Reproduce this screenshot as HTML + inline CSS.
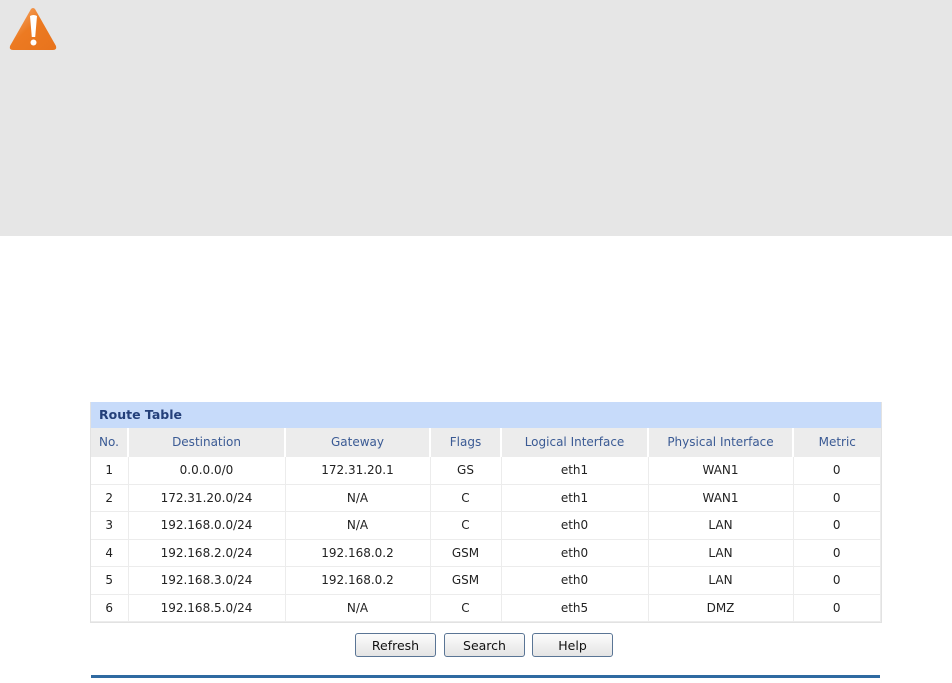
<!DOCTYPE html>
<html><head><meta charset="utf-8"><style>
html,body{margin:0;padding:0;background:#fff;width:952px;height:683px;overflow:hidden;font-family:"DejaVu Sans","Liberation Sans",sans-serif;}
.warn{position:absolute;left:0;top:0;width:952px;height:236px;background:#e6e6e6;}
.tbl{position:absolute;left:90px;top:402px;width:790px;border:1px solid #e2e2e2;border-top:none;}
.title{height:26px;background:#c7dbfa;color:#24407a;font-weight:bold;font-size:12.5px;line-height:26px;padding-left:8px;}
table{border-collapse:collapse;width:100%;font-size:12px;}
td{height:26.5px;text-align:center;border:1px solid #ececec;padding:0;color:#222;}
tr.h td{background:#ececec;color:#3a5a94;border-color:#fff;border-width:0 2px 0 0;height:28px;}
tr td:first-child{border-left:none}
.btn{position:absolute;top:633px;height:24px;border:1px solid #5a7595;border-radius:3px;background:linear-gradient(#fcfcfc,#e4e4e4);font-size:12.5px;line-height:23px;text-align:center;color:#111;box-sizing:border-box;}
.line{position:absolute;left:91px;top:675px;width:789px;height:3px;background:#2f6aa1;}
</style></head><body>
<div class="warn">
<svg width="56" height="56" style="position:absolute;left:4px;top:4px" viewBox="0 0 56 56">
<defs><linearGradient id="g" x1="0" y1="0" x2="1" y2="1"><stop offset="0" stop-color="#f8b27a"/><stop offset=".45" stop-color="#ec7a22"/><stop offset="1" stop-color="#e8731c"/></linearGradient></defs>
<path d="M27 5 Q29 3 31 5 L52 42 Q53 46 49 46 L9 46 Q5 46 6 42 Z" fill="url(#g)"/>
<path d="M26 12 Q29.5 10 33 12 L31.2 33 L27.8 33 Z" fill="#fff"/>
<circle cx="29.5" cy="38.5" r="3" fill="#fff"/>
</svg>
</div>
<div class="tbl">
<div class="title">Route Table</div>
<table>
<colgroup><col style="width:37px"><col style="width:157px"><col style="width:145px"><col style="width:71px"><col style="width:147px"><col style="width:145px"><col></colgroup>
<tr class="h"><td>No.</td><td>Destination</td><td>Gateway</td><td>Flags</td><td>Logical Interface</td><td>Physical Interface</td><td style="border-right:none">Metric</td></tr>
<tr><td>1</td><td>0.0.0.0/0</td><td>172.31.20.1</td><td>GS</td><td>eth1</td><td>WAN1</td><td>0</td></tr>
<tr><td>2</td><td>172.31.20.0/24</td><td>N/A</td><td>C</td><td>eth1</td><td>WAN1</td><td>0</td></tr>
<tr><td>3</td><td>192.168.0.0/24</td><td>N/A</td><td>C</td><td>eth0</td><td>LAN</td><td>0</td></tr>
<tr><td>4</td><td>192.168.2.0/24</td><td>192.168.0.2</td><td>GSM</td><td>eth0</td><td>LAN</td><td>0</td></tr>
<tr><td>5</td><td>192.168.3.0/24</td><td>192.168.0.2</td><td>GSM</td><td>eth0</td><td>LAN</td><td>0</td></tr>
<tr><td>6</td><td>192.168.5.0/24</td><td>N/A</td><td>C</td><td>eth5</td><td>DMZ</td><td>0</td></tr>
</table>
</div>
<div class="btn" style="left:355px;width:81px">Refresh</div>
<div class="btn" style="left:444px;width:81px">Search</div>
<div class="btn" style="left:532px;width:81px">Help</div>
<div class="line"></div>
</body></html>
